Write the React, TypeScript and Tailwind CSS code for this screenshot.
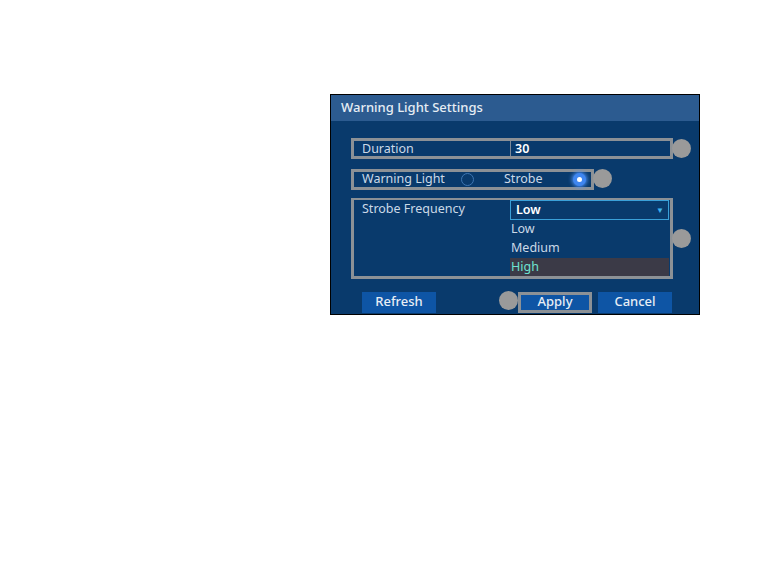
import { FC } from 'react';

const Marker: FC<{ className: string }> = ({ className }) => (
  <span
    className={`absolute h-[19px] w-[19px] rounded-full bg-[#9a9a9a] ${className}`}
  />
);

const Radio: FC<{ checked?: boolean }> = ({ checked }) =>
  checked ? (
    <span className="flex h-[13px] w-[13px] items-center justify-center rounded-full bg-[#3f86f0] shadow-[0_0_4px_1px_#4f95ff]">
      <span className="h-[5px] w-[5px] rounded-full bg-white" />
    </span>
  ) : (
    <span className="h-[13px] w-[13px] rounded-full border border-[#3e76b2]" />
  );

const options = ['Low', 'Medium', 'High'];

export default function App() {
  return (
    <div className="min-h-[562px] w-[778px] bg-white pl-[330px] pt-[94px] font-['Noto_Sans',sans-serif]">
      <div className="relative flex h-[221px] w-[370px] flex-col border border-black bg-[#093a6c]">
        <div className="flex h-[26px] items-center bg-[#2c5b90] pl-[10px] text-[13px] font-medium text-[#e6edf4]">
          Warning Light Settings
        </div>
        <div className="flex flex-col pl-[20px] pt-[17px] text-[12.5px] text-[#cbd9e7]">
          <div className="flex h-[21px] w-[322px] border-[3px] border-[#8c9196]">
            <span className="flex w-[156px] items-center pl-[8px] pt-[2px]">
              Duration
            </span>
            <span className="flex flex-1 items-center border-l border-[#7d8a99] pl-[4px] pt-[2px] font-semibold text-white">
              30
            </span>
          </div>
          <div className="mt-[10px] flex h-[21px] w-[243px] items-center border-[3px] border-[#8c9196] pl-[8px]">
            <span className="w-[99px] shrink-0">Warning Light</span>
            <Radio />
            <span className="ml-[30px] w-[69px] shrink-0">Strobe</span>
            <Radio checked />
          </div>
          <div className="mt-[8px] flex h-[81px] w-[322px] border-[3px] border-t-[2px] border-[#8c9196]">
            <span className="w-[156px] pl-[8px]">Strobe Frequency</span>
            <div className="flex w-[159px] flex-col">
              <div className="flex h-[20px] items-center justify-between border border-[#3aa0d8] pl-[5px] pr-[4px] font-semibold text-white">
                Low
                <span className="text-[8px] text-[#3fb4f0]">▼</span>
              </div>
              {options.map((option) => (
                <div
                  key={option}
                  className={
                    option === 'High'
                      ? 'flex h-[19px] items-center bg-[#3b3a47] pl-[1px] text-[#6ee3d1]'
                      : 'flex h-[19px] items-center pl-[1px]'
                  }
                >
                  {option}
                </div>
              ))}
            </div>
          </div>
          <div className="mt-[13px] flex h-[21px] items-stretch text-[13px] font-medium leading-none text-[#e8eef5]">
            <button className="ml-[11px] w-[74px] bg-[#0e55a5] pb-[2px]">
              Refresh
            </button>
            <button className="ml-[82px] w-[74px] border-[3px] border-[#8c9196] bg-[#0e55a5] pb-[2px]">
              Apply
            </button>
            <button className="ml-[6px] w-[74px] bg-[#0e55a5] pb-[2px]">
              Cancel
            </button>
          </div>
        </div>
        <Marker className="left-[341px] top-[44px]" />
        <Marker className="left-[262px] top-[74px]" />
        <Marker className="left-[341px] top-[134px]" />
        <Marker className="left-[168px] top-[196px]" />
      </div>
    </div>
  );
}
